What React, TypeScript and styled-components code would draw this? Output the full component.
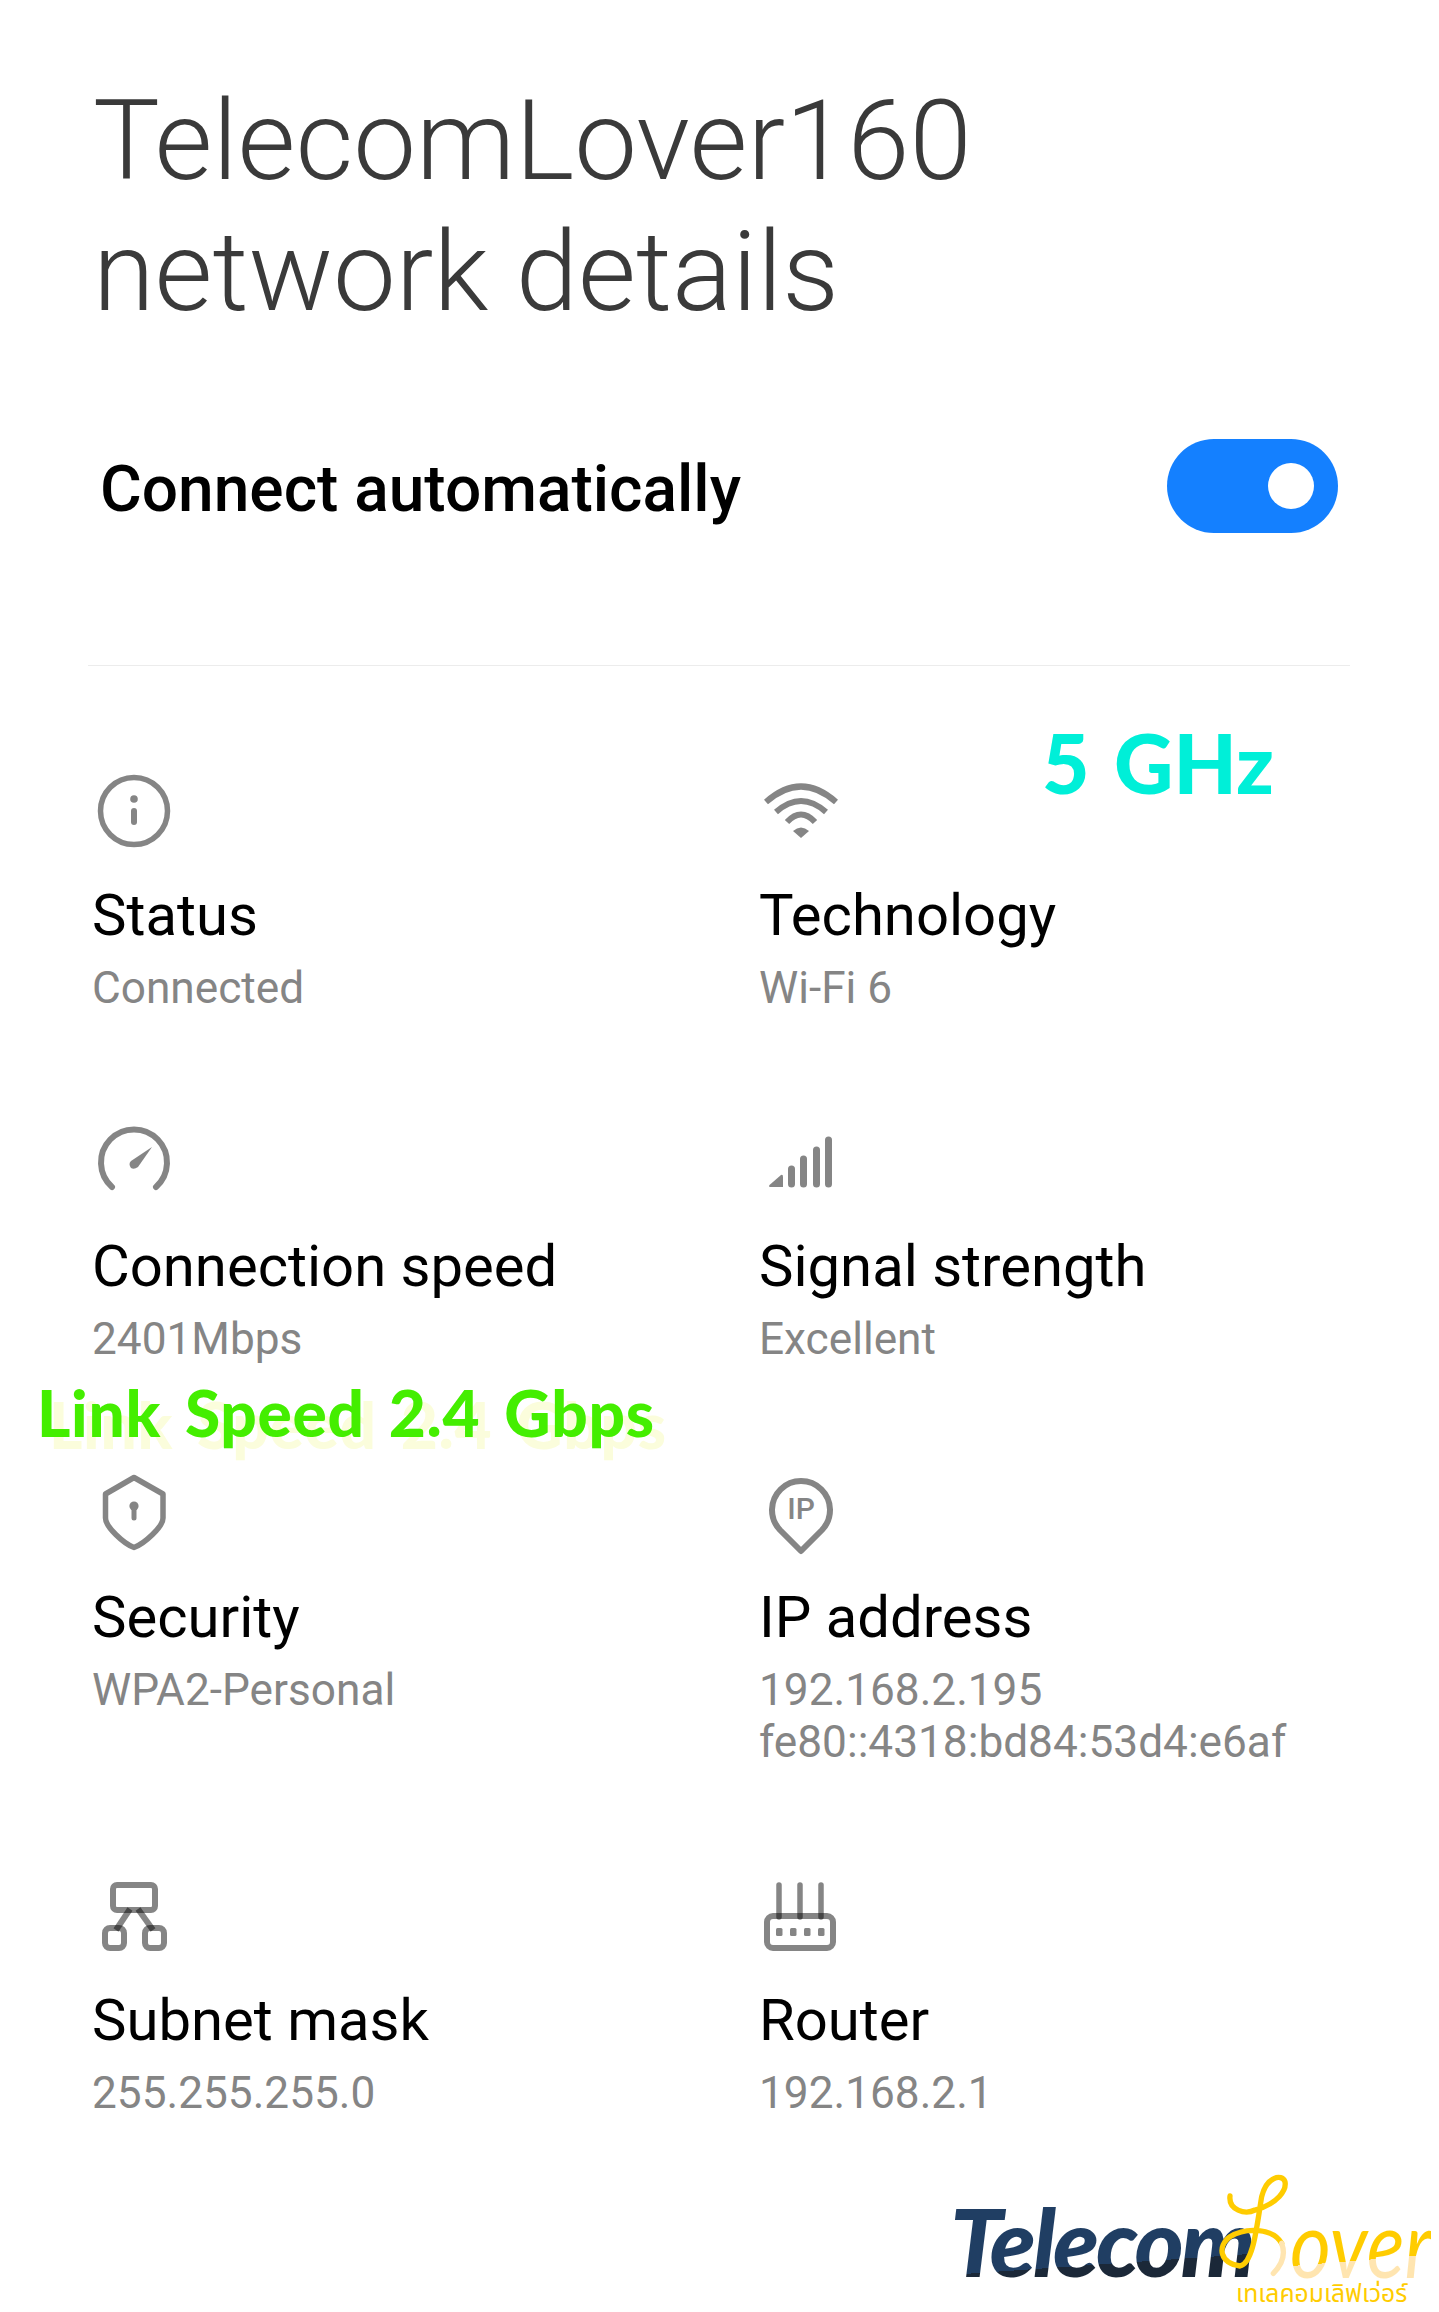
import React from "react";
import styled, { createGlobalStyle } from "styled-components";

const Global = createGlobalStyle`
  html, body { margin: 0; padding: 0; background: #fff; }
  body { font-family: Roboto, "Liberation Sans", sans-serif; }
`;

const Page = styled.main`
  position: relative;
  width: 1439px;
  height: 2312px;
  overflow: hidden;
  background: #fff;
  padding-top: 75px;
  box-sizing: border-box;
`;

const Title = styled.h1`
  margin: 0 0 0 93px;
  font-size: 112px;
  line-height: 131px;
  font-weight: 300;
  color: #3a3a3a;
`;

const SettingRow = styled.div`
  display: flex;
  align-items: center;
  justify-content: space-between;
  margin: 102px 101px 0 100px;
`;

const SettingLabel = styled.span`
  font-size: 64px;
  line-height: 94px;
  font-weight: 500;
  color: #000;
  position: relative;
  top: 4px;
`;

const Toggle = styled.span`
  position: relative;
  width: 171px;
  height: 94px;
  border-radius: 47px;
  background: #1480ff;
  &::after {
    content: "";
    position: absolute;
    right: 24px;
    top: 24px;
    width: 46px;
    height: 46px;
    border-radius: 50%;
    background: #fff;
  }
`;

const Divider = styled.hr`
  margin: 132px 89px 0 88px;
  border: 0;
  height: 1px;
  background: #ececec;
`;

const Grid = styled.section`
  display: grid;
  grid-template-columns: 667px 1fr;
  row-gap: 108px;
  margin: 105px 0 0 92px;
`;

const Cell = styled.article`
  display: flex;
  flex-direction: column;
`;

const Glyph = styled.svg.attrs({ viewBox: "0 0 90 90", fill: "none" })`
  display: block;
  width: 90px;
  height: 90px;
  margin: 0 0 -10px 2px;
  overflow: visible;
`;

const Label = styled.div`
  margin-top: 29px;
  font-size: 58px;
  line-height: 70px;
  color: #000;
`;

const Value = styled.div`
  margin-top: 12px;
  font-size: 44.2px;
  line-height: 52px;
  color: #858585;
`;

const Note = styled.div<{ $color: string; $size: number; $top: number; $left: number; $shadow?: boolean }>`
  position: absolute;
  top: ${(p) => p.$top}px;
  left: ${(p) => p.$left}px;
  font-family: Lato, "Open Sans", sans-serif;
  font-weight: 900;
  font-size: ${(p) => p.$size}px;
  line-height: 1;
  white-space: nowrap;
  color: ${(p) => p.$color};
  ${(p) =>
    p.$shadow
      ? "letter-spacing: 0.7px; word-spacing: 8px; text-shadow: 12px 12px 0 #fbfddc;"
      : "word-spacing: 5px;"}
`;

const Logo = styled.div`
  position: absolute;
  left: 920px;
  top: 2160px;
  width: 519px;
  height: 152px;
`;

const LogoWord = styled.span`
  position: absolute;
  left: 30px;
  top: 36px;
  font-family: Lato, sans-serif;
  font-style: italic;
  font-weight: 900;
  font-size: 94px;
  line-height: 90px;
  letter-spacing: -3px;
  background: linear-gradient(176deg, #203e63 71%, #1b2838 71%);
  -webkit-background-clip: text;
  background-clip: text;
  color: transparent;
`;

const LogoScript = styled.span`
  position: absolute;
  left: 370px;
  top: 37px;
  font-family: Lato, sans-serif;
  font-style: italic;
  font-weight: 400;
  font-size: 94px;
  line-height: 90px;
  transform: scaleX(0.84);
  transform-origin: left center;
  background: linear-gradient(176deg, #ffcc00 68%, #ffe5b0 68%);
  -webkit-background-clip: text;
  background-clip: text;
  color: transparent;
`;

const LogoSwash = styled.svg.attrs({ viewBox: "0 0 1557 456", fill: "none" })`
  position: absolute;
  left: 0;
  top: 0;
  width: 519px;
  height: 152px;
`;

const LogoThai = styled.span`
  position: absolute;
  left: 316px;
  top: 118px;
  font-family: "Noto Sans", "Noto Sans Thai", "DejaVu Sans", sans-serif;
  font-size: 24.7px;
  line-height: 30px;
  white-space: nowrap;
  color: #ffcc00;
`;

const stroke = "rgba(0,0,0,0.48)";

const InfoIcon = () => (
  <Glyph>
    <circle cx="40" cy="40" r="33.5" stroke="#858585" strokeWidth="5.5" />
    <circle cx="40" cy="28" r="3.8" fill="#858585" />
    <path d="M40 40v11" stroke="#858585" strokeWidth="6" strokeLinecap="round" />
  </Glyph>
);

const WifiIcon = () => (
  <Glyph>
    <g stroke="#858585" strokeWidth="6">
      <path d="M5 31Q40 0 75 31" />
      <path d="M15 41Q40 19 65 41" />
      <path d="M26 51Q40 36 54 51" />
    </g>
    <path d="M32 60Q40 53 48 60L40 67Z" fill="#858585" />
  </Glyph>
);

const GaugeIcon = () => (
  <Glyph>
    <path d="M18 65A33 33 0 1 1 62 65" stroke="#858585" strokeWidth="6" strokeLinecap="round" />
    <path d="M58 25L44 45Q40 48 37 46Q34 42 37 39Z" fill="#858585" />
  </Glyph>
);

const SignalIcon = () => (
  <Glyph>
    <path d="M8.5 63L20 53Q22 52 22 55V65H10Q7 65 8.5 63Z" fill="#858585" />
    <g stroke="#858585" strokeWidth="7" strokeLinecap="round">
      <path d="M30.5 47V62" />
      <path d="M42.5 37V62" />
      <path d="M55.5 28V62" />
      <path d="M67.5 18V62" />
    </g>
  </Glyph>
);

const ShieldIcon = () => (
  <Glyph>
    <path
      d="M40 4.5L69 21V45C69 54 50 71 40 74.5C30 71 11.5 54 11.5 45V21Z"
      stroke="#858585"
      strokeWidth="5.5"
      strokeLinejoin="round"
    />
    <circle cx="40" cy="33" r="4.6" fill="#858585" />
    <path d="M40 34v11" stroke="#858585" strokeWidth="5" strokeLinecap="round" />
  </Glyph>
);

const PinIcon = () => (
  <Glyph>
    <path
      d="M40 78L19 57A29 29 0 1 1 61 57Z"
      stroke="#858585"
      strokeWidth="6"
      strokeLinejoin="round"
    />
    <text
      x="40"
      y="46"
      textAnchor="middle"
      fontFamily="Roboto, sans-serif"
      fontWeight="500"
      fontSize="30"
      fill="#858585"
    >
      IP
    </text>
  </Glyph>
);

const SubnetIcon = () => (
  <Glyph>
    <g stroke={stroke} strokeWidth="6">
      <rect x="19" y="9" width="42" height="25" rx="4" />
      <rect x="11" y="52" width="19" height="20" rx="5" />
      <rect x="51" y="52" width="19" height="20" rx="5" />
      <path d="M36 33L22 54" />
      <path d="M44 33L59 54" />
    </g>
  </Glyph>
);

const RouterIcon = () => (
  <Glyph>
    <rect x="6" y="40" width="66" height="32" rx="6" stroke="#858585" strokeWidth="6" />
    <g stroke={stroke} strokeWidth="5.5" strokeLinecap="round">
      <path d="M18 9V41" />
      <path d="M39 9V41" />
      <path d="M60 9V41" />
    </g>
    <g fill="#858585">
      <rect x="15" y="52" width="6.5" height="8" rx="1.5" />
      <rect x="29" y="52" width="6.5" height="8" rx="1.5" />
      <rect x="43" y="52" width="6.5" height="8" rx="1.5" />
      <rect x="57" y="52" width="6.5" height="8" rx="1.5" />
    </g>
  </Glyph>
);

const details = [
  { icon: <InfoIcon />, label: "Status", values: ["Connected"] },
  { icon: <WifiIcon />, label: "Technology", values: ["Wi-Fi 6"] },
  { icon: <GaugeIcon />, label: "Connection speed", values: ["2401Mbps"] },
  { icon: <SignalIcon />, label: "Signal strength", values: ["Excellent"] },
  { icon: <ShieldIcon />, label: "Security", values: ["WPA2-Personal"] },
  { icon: <PinIcon />, label: "IP address", values: ["192.168.2.195", "fe80::4318:bd84:53d4:e6af"] },
  { icon: <SubnetIcon />, label: "Subnet mask", values: ["255.255.255.0"] },
  { icon: <RouterIcon />, label: "Router", values: ["192.168.2.1"] },
];

export default function App() {
  return (
    <Page>
      <Global />
      <Title>
        TelecomLover160
        <br />
        network details
      </Title>
      <SettingRow>
        <SettingLabel>Connect automatically</SettingLabel>
        <Toggle />
      </SettingRow>
      <Divider />
      <Grid>
        {details.map((d) => (
          <Cell key={d.label}>
            {d.icon}
            <Label>{d.label}</Label>
            <Value>
              {d.values.map((v) => (
                <div key={v}>{v}</div>
              ))}
            </Value>
          </Cell>
        ))}
      </Grid>
      <Note $color="#00efd8" $size={82} $top={721} $left={1042}>
        5 GHz
      </Note>
      <Note $color="#44ee00" $size={64} $top={1381} $left={37} $shadow>
        Link Speed 2.4 Gbps
      </Note>
      <Logo>
        <LogoWord>Telecom</LogoWord>
        <LogoScript>over</LogoScript>
        <LogoSwash>
          <path
            d="M930 108C925 150 975 165 1005 150C1075 130 1100 90 1095 65C1085 40 1040 50 1025 110C1010 200 1000 310 960 318C900 310 890 260 930 230C980 200 1060 205 1085 250"
            stroke="#ffcc00"
            strokeWidth="16"
            strokeLinecap="round"
          />
          <path d="M1085 250C1100 290 1080 320 1060 340" stroke="#ffe5b0" strokeWidth="16" strokeLinecap="round" />
        </LogoSwash>
        <LogoThai>เทเลคอมเลิฟเว่อร์</LogoThai>
      </Logo>
    </Page>
  );
}
